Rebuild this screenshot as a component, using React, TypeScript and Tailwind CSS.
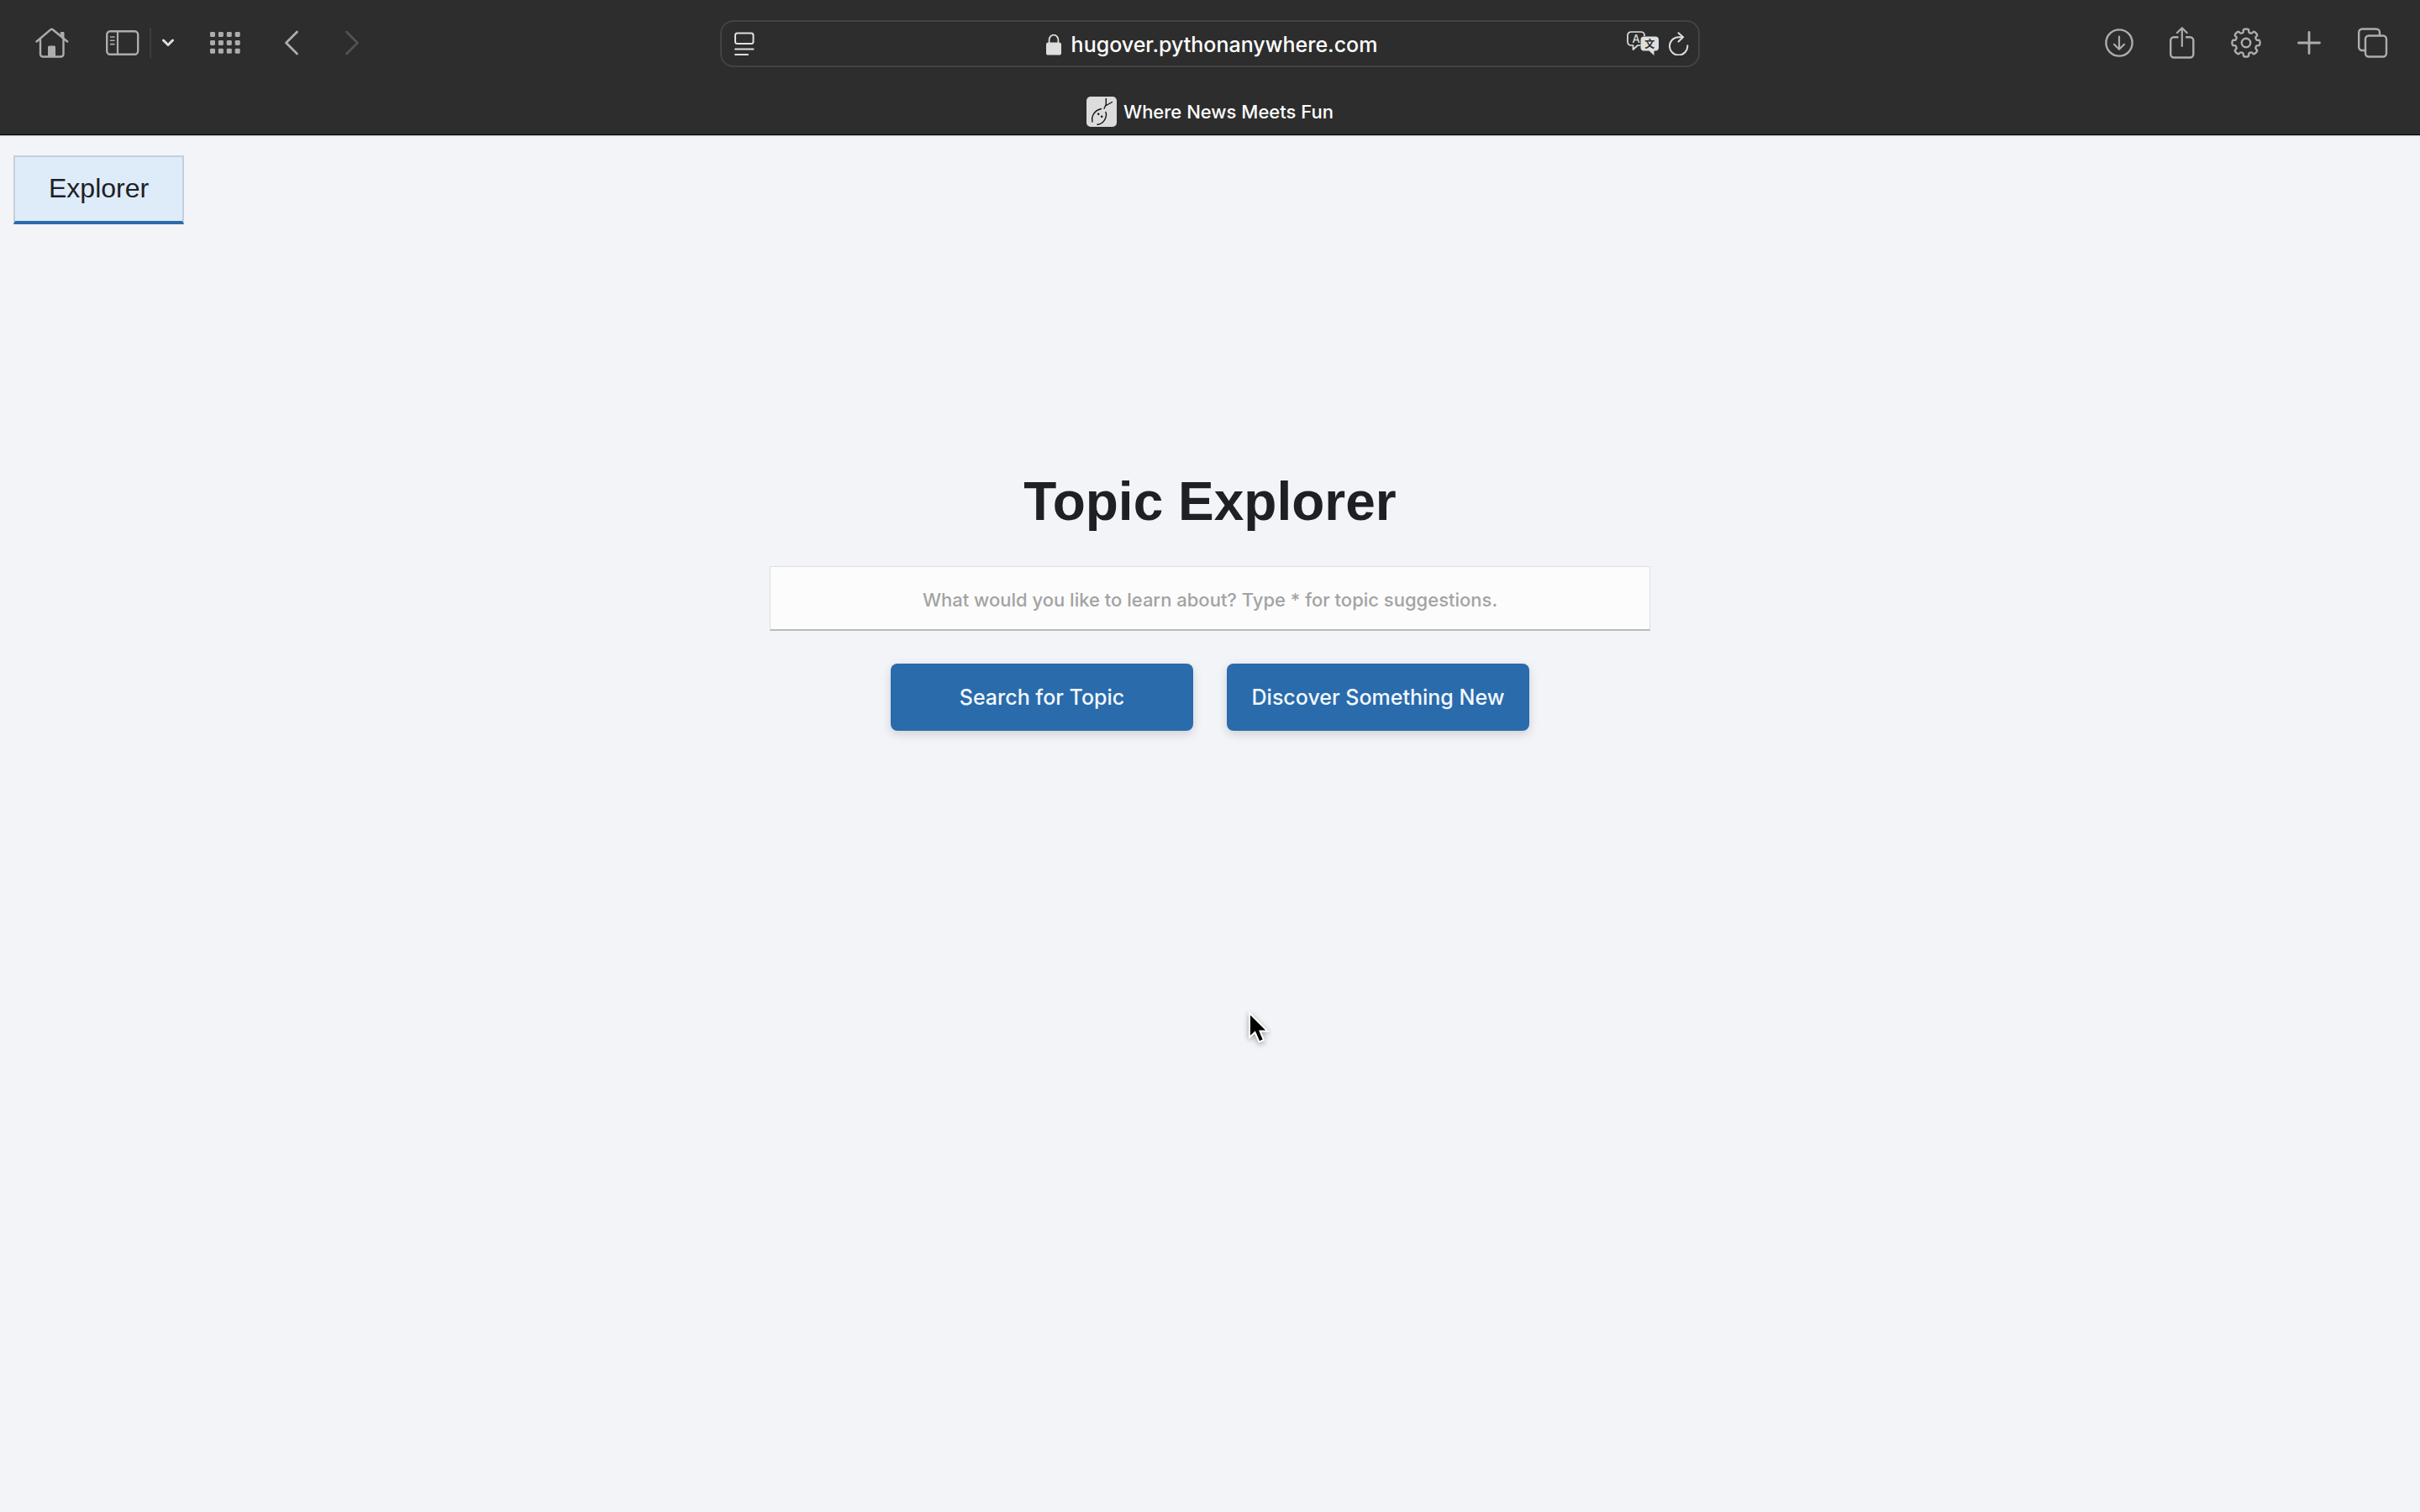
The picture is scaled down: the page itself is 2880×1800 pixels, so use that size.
import type { ReactNode } from "react";

const gearPath = (() => {
  const cx = 18;
  const cy = 18;
  const pts: [number, number][] = [];
  for (let i = 0; i < 8; i++) {
    const base = (i * Math.PI) / 4 - Math.PI / 2;
    const profile: [number, number][] = [
      [-0.31, 12.7],
      [-0.23, 13.4],
      [-0.2, 16.9],
      [0.2, 16.9],
      [0.23, 13.4],
      [0.31, 12.7],
    ];
    for (const [a, r] of profile) {
      pts.push([cx + r * Math.cos(base + a), cy + r * Math.sin(base + a)]);
    }
  }
  const mid = (a: [number, number], b: [number, number]) =>
    `${((a[0] + b[0]) / 2).toFixed(2)} ${((a[1] + b[1]) / 2).toFixed(2)}`;
  let d = `M${mid(pts[pts.length - 1], pts[0])}`;
  pts.forEach((p, i) => {
    d += `Q${p[0].toFixed(2)} ${p[1].toFixed(2)} ${mid(p, pts[(i + 1) % pts.length])}`;
  });
  return d + "Z";
})();

function IconButton({ label, className, children }: { label: string; className?: string; children: ReactNode }) {
  return (
    <button type="button" aria-label={label} className={`flex items-center justify-center ${className ?? ""}`}>
      {children}
    </button>
  );
}

function HomeIcon() {
  return (
    <svg width="40" height="36" viewBox="0 0 40 36" fill="none" stroke="currentColor" strokeWidth="2.4" strokeLinecap="round" strokeLinejoin="round">
      <path d="M1.500 16.500 18.400 2.200a2 2 0 0 1 2.400 0L38.200 16.500" />
      <path d="M6 13.500V31.500a3 3 0 0 0 3 3H30.500a3 3 0 0 0 3-3V13.500" />
      <path d="M30.500 5.500h3.500v6.500l-3.500-3z" fill="currentColor" strokeWidth="1" />
      <path d="M15 34.500V23a1.500 1.500 0 0 1 1.500-1.500h6A1.500 1.500 0 0 1 24 23V34.500z" fill="currentColor" stroke="none" />
    </svg>
  );
}

function SidebarIcon() {
  return (
    <svg width="40" height="30" viewBox="0 0 40 30" fill="none" stroke="currentColor" strokeWidth="2.4" strokeLinecap="round">
      <rect x="1.200" y="1.200" width="37" height="27.600" rx="4" />
      <path d="M14 1.500V28.500" strokeWidth="2.200" />
      <path d="M5.500 8h4.500M5.500 12.300h4.500M5.500 16.600h4.500" strokeWidth="1.600" />
    </svg>
  );
}

function GridIcon() {
  return (
    <svg width="36" height="26" viewBox="0 0 36 26" fill="currentColor">
      {[0, 1, 2].map((r) =>
        [0, 1, 2, 3].map((c) => <rect key={`${r}-${c}`} x={c * 9.9} y={r * 9.9} width="6" height="6" rx="1.400" />),
      )}
    </svg>
  );
}

function ReaderIcon() {
  return (
    <svg width="24" height="28" viewBox="0 0 24 28" fill="none" stroke="currentColor" strokeWidth="2" strokeLinecap="round">
      <rect x="1" y="1.500" width="21.500" height="12.500" rx="2.500" />
      <path d="M1 20.400h21.500M1 27h15" />
    </svg>
  );
}

function LockIcon() {
  return (
    <svg width="18" height="26" viewBox="0 0 18 26" fill="none">
      <path d="M3.600 12V7.500a5.400 5.900 0 0 1 10.800 0V12" stroke="currentColor" strokeWidth="1.800" />
      <rect x="0" y="10.500" width="18" height="15" rx="2.600" fill="currentColor" />
    </svg>
  );
}

function TranslateIcon() {
  return (
    <svg width="38" height="30" viewBox="0 0 38 30" fill="none">
      <path
        d="M16.500 17H13L7.500 22v-5H5a4 4 0 0 1-4-4V5a4 4 0 0 1 4-4h12a4 4 0 0 1 4 4v1"
        stroke="currentColor"
        strokeWidth="1.700"
        strokeLinejoin="round"
      />
      <text x="11" y="14" textAnchor="middle" fontSize="13" className="fill-current font-['Inter',sans-serif] font-medium">
        A
      </text>
      <path d="M20.500 6.500H34a4 4 0 0 1 4 4V19.500a4 4 0 0 1-4 4h-1.500V29l-6-5.500h-6a4 4 0 0 1-4-4v-9a4 4 0 0 1 4-4z" fill="currentColor" />
      <text x="27.200" y="19.500" textAnchor="middle" fontSize="12" className="fill-[#2d2d2d] font-['Noto_Sans_CJK_SC',sans-serif] font-bold">
        文
      </text>
    </svg>
  );
}

function ReloadIcon() {
  return (
    <svg width="24" height="28" viewBox="0 0 24 28" fill="none" stroke="currentColor" strokeWidth="2" strokeLinecap="round" strokeLinejoin="round">
      <path d="M22.300 16.200A10.700 10.700 0 1 1 11.500 6.200H16.500" />
      <path d="M11.500 1.200l5.500 5-5.500 5.300" />
    </svg>
  );
}

function DownloadIcon() {
  return (
    <svg width="34" height="34" viewBox="0 0 34 34" fill="none" stroke="currentColor" strokeWidth="2.400" strokeLinecap="round" strokeLinejoin="round">
      <circle cx="17" cy="17" r="15.600" />
      <path d="M17 9.500V24M11 18.700l6 6 6-6" strokeWidth="2.200" />
    </svg>
  );
}

function ShareIcon() {
  return (
    <svg width="30" height="38" viewBox="0 0 30 38" fill="none" stroke="currentColor" strokeWidth="2.400" strokeLinecap="round" strokeLinejoin="round">
      <path d="M9.500 12.200H5.200a4 4 0 0 0-4 4V32.500a4 4 0 0 0 4 4H24.300a4 4 0 0 0 4-4V16.200a4 4 0 0 0-4-4h-4.300" />
      <path d="M14.800 23V1.500M9 7l5.800-5.800L20.600 7" strokeWidth="2.200" />
    </svg>
  );
}

function GearIcon() {
  return (
    <svg width="36" height="36" viewBox="0 0 36 36" fill="none" stroke="currentColor" strokeWidth="2.400" strokeLinejoin="round">
      <path d={gearPath} />
      <circle cx="18" cy="18" r="5.200" />
    </svg>
  );
}

function TabsIcon() {
  return (
    <svg width="36" height="36" viewBox="0 0 36 36" fill="none" stroke="currentColor" strokeWidth="2.400">
      <path d="M8.500 27H5.200a4 4 0 0 1-4-4V5.500a4 4 0 0 1 4-4H22a4 4 0 0 1 4 4V9" />
      <rect x="9" y="9.500" width="25" height="25" rx="4" />
    </svg>
  );
}

function Favicon() {
  return (
    <svg width="36" height="36" viewBox="0 0 36 36" fill="none">
      <rect width="36" height="36" rx="5" fill="#dcdcdc" />
      <g stroke="#141414" strokeWidth="1.400" strokeLinecap="round">
        <path d="M7 30C5.500 23 9.500 16.500 17.500 14.500" />
        <path d="M23 18.500C25 25 20 32.500 13 33.300" />
        <path d="M23.300 2.500V9.200L21 14.200M23.500 10.500L30.500 6.500" />
      </g>
      <circle cx="14.200" cy="20.800" r="1.300" fill="#141414" />
      <circle cx="18.200" cy="23.800" r="1.300" fill="#141414" />
    </svg>
  );
}

function Toolbar() {
  return (
    <header className="border-b border-black bg-[#2d2d2d] text-[#adadad]">
      <div className="grid h-[104px] grid-cols-[1fr_minmax(0,1166px)_1fr] items-center">
        <nav aria-label="Navigation" className="flex items-center pb-0.5 pl-[42px]">
          <IconButton label="Home">
            <HomeIcon />
          </IconButton>
          <IconButton label="Sidebar" className="ml-11">
            <SidebarIcon />
          </IconButton>
          <span className="ml-3 h-9 w-0.5 bg-[#3d3d3d]" />
          <IconButton label="Tab groups" className="ml-3 text-[#dedede]">
            <svg width="16" height="10" viewBox="0 0 16 10" fill="none" stroke="currentColor" strokeWidth="3" strokeLinecap="round" strokeLinejoin="round">
              <path d="M2.500 2l5.500 5.500L13.500 2" />
            </svg>
          </IconButton>
          <IconButton label="Top sites" className="ml-[42px]">
            <GridIcon />
          </IconButton>
          <IconButton label="Back" className="ml-[52px]">
            <svg width="18" height="30" viewBox="0 0 18 30" fill="none" stroke="currentColor" strokeWidth="2.800" strokeLinecap="round" strokeLinejoin="round">
              <path d="M15.500 2L2.500 15l13 13" />
            </svg>
          </IconButton>
          <IconButton label="Forward" className="ml-[54px] text-[#525252]">
            <svg width="18" height="30" viewBox="0 0 18 30" fill="none" stroke="currentColor" strokeWidth="2.800" strokeLinecap="round" strokeLinejoin="round">
              <path d="M2.500 2l13 13-13 13" />
            </svg>
          </IconButton>
        </nav>

        <div className="grid h-14 grid-cols-[1fr_auto_1fr] items-center rounded-2xl border-2 border-[#434343] pl-[15px] pr-[11px] text-[#dedede]">
          <IconButton label="Reader" className="justify-self-start">
            <ReaderIcon />
          </IconButton>
          <button type="button" className="flex items-center gap-3 pt-0.5 font-['Inter',sans-serif] text-[25px] font-medium leading-8 text-white">
            <span className="text-[#dedede]">
              <LockIcon />
            </span>
            hugover.pythonanywhere.com
          </button>
          <div className="flex items-center gap-3 justify-self-end">
            <IconButton label="Translate">
              <TranslateIcon />
            </IconButton>
            <IconButton label="Reload">
              <ReloadIcon />
            </IconButton>
          </div>
        </div>

        <div className="flex items-center justify-end pb-0.5 pr-[38px]">
          <IconButton label="Downloads">
            <DownloadIcon />
          </IconButton>
          <IconButton label="Share" className="ml-[43px]">
            <ShareIcon />
          </IconButton>
          <IconButton label="Settings" className="ml-[43px]">
            <GearIcon />
          </IconButton>
          <IconButton label="New tab" className="ml-[43px]">
            <svg width="28" height="28" viewBox="0 0 28 28" fill="none" stroke="currentColor" strokeWidth="2.800" strokeLinecap="round">
              <path d="M14 1.500v25M1.500 14h25" />
            </svg>
          </IconButton>
          <IconButton label="Tab overview" className="ml-11">
            <TabsIcon />
          </IconButton>
        </div>
      </div>
      <div className="flex h-14 items-start justify-center pt-[11px]">
        <button type="button" className="flex items-center gap-2 font-['Inter',sans-serif] text-[22px] font-medium leading-9 text-white">
          <Favicon />
          Where News Meets Fun
        </button>
      </div>
    </header>
  );
}

export default function App() {
  return (
    <div className="relative min-h-screen bg-[#f2f4f8] font-['Liberation_Sans',Arial,sans-serif] text-[#1d2125]">
      <Toolbar />
      <main className="border-t border-[#c4c5c8] px-4 pt-[23px]">
        <button
          type="button"
          className="border-2 border-b-4 border-[#c3cfdb] border-b-[#2a6bab] bg-[#deebf9] px-10 pb-[21px] pt-[19px] text-[32px] leading-9"
        >
          Explorer
        </button>

        <section className="mx-auto mt-[291px] flex max-w-[1048px] flex-col items-center">
          <h1 className="text-[64px] font-bold leading-[78px]">Topic Explorer</h1>
          <input
            type="text"
            aria-label="Topic"
            placeholder="What would you like to learn about? Type * for topic suggestions."
            className="mt-[38px] h-[77px] w-full border border-b-2 border-[#dcdfe5] border-b-[#bababa] bg-[#fcfcfc] pt-1 text-center font-['Inter',sans-serif] text-[22px] font-medium outline-none placeholder:text-[#a3a3a3]"
          />
          <div className="mt-[39px] flex gap-10">
            <button
              type="button"
              className="h-20 w-[360px] rounded-lg bg-[#2a6bab] pt-0.5 font-['Inter',sans-serif] text-[25px] font-medium text-[#f2f8fd] shadow-[0_4px_12px_rgba(0,0,0,0.15)]"
            >
              Search for Topic
            </button>
            <button
              type="button"
              className="h-20 w-[360px] rounded-lg bg-[#2a6bab] pt-0.5 font-['Inter',sans-serif] text-[25px] font-medium text-[#f2f8fd] shadow-[0_4px_12px_rgba(0,0,0,0.15)]"
            >
              Discover Something New
            </button>
          </div>
        </section>
      </main>

      <svg
        className="pointer-events-none absolute left-[1484px] top-[1203px] drop-shadow-[0_2px_3px_rgba(0,0,0,0.35)]"
        width="28"
        height="40"
        viewBox="0 0 28 40"
        aria-hidden="true"
      >
        <path d="M3 3V32L9.500 26 14.500 37.500 20 35 15.500 24.500H24.500Z" fill="#000" stroke="#fff" strokeWidth="2" strokeLinejoin="miter" />
      </svg>
    </div>
  );
}
